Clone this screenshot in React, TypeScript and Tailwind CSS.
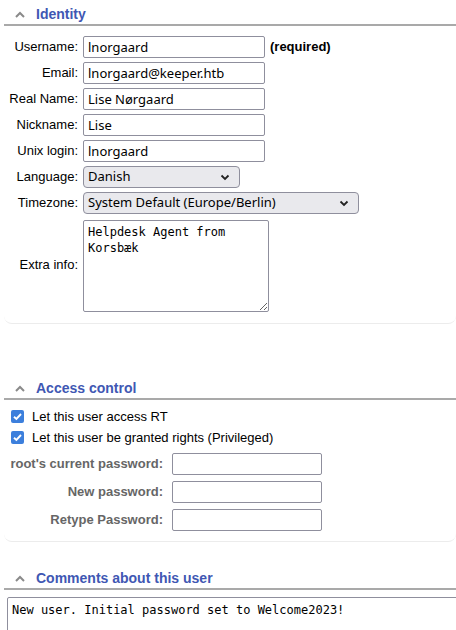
import type { ReactNode } from "react";

const sans = "font-['Liberation_Sans',Arial,sans-serif]";
const field = "font-['Noto_Sans',sans-serif]";
const mono = "font-['DejaVu_Sans_Mono',monospace]";

function Chevron({ dir = "up" }: { dir?: "up" | "down" }) {
  if (dir === "down") {
    return (
      <svg width="10" height="7" viewBox="0 0 10 7">
        <path d="M1.5 1.5 L5 5 L8.5 1.5" fill="none" stroke="#222" strokeWidth="1.8" />
      </svg>
    );
  }
  return (
    <svg width="10" height="7" viewBox="0 0 10 7">
      <path d="M1 6 L5 2 L9 6" fill="none" stroke="#8a8a8a" strokeWidth="2" />
    </svg>
  );
}

function SectionHeader({ title }: { title: string }) {
  return (
    <div className="ml-[4px] border-b-2 border-[#a9a9a9]">
      <div className="flex items-center gap-[11px] pl-[11px] pt-[4px] h-[24px]">
        <Chevron />
        <span className={`${sans} text-[14px] font-bold text-[#4057b3] leading-none`}>{title}</span>
      </div>
    </div>
  );
}

function Card({ children, className = "" }: { children: ReactNode; className?: string }) {
  return (
    <div className={`ml-[4px] rounded-b-[8px] border-b border-[#ececec] ${className}`}>
      {children}
    </div>
  );
}

function TextInput({ value, width }: { value: string; width: string }) {
  return (
    <input
      readOnly
      defaultValue={value}
      className={`${field} ${width} h-[22px] border border-[#8f8f9d] rounded-[2px] px-[4px] text-[13px] text-black outline-none`}
    />
  );
}

function Select({ value, width }: { value: string; width: string }) {
  return (
    <div
      className={`${field} ${width} h-[22px] flex items-center justify-between border border-[#8f8f9d] rounded-[4px] bg-[#e9e9ed] pl-[4px] pr-[9px] text-[13px] text-black`}
    >
      <span>{value}</span>
      <Chevron dir="down" />
    </div>
  );
}

const Label = ({ children }: { children: ReactNode }) => (
  <span className={`${sans} text-[13px] text-black text-right`}>{children}</span>
);

function Identity() {
  return (
    <>
      <SectionHeader title="Identity" />
      <Card className="pt-[10px] pb-[11px]">
        <div className="grid grid-cols-[74px_auto] gap-x-[5px] gap-y-[4px] items-center">
          <Label>Username:</Label>
          <div className="flex items-center gap-[5px]">
            <TextInput value="lnorgaard" width="w-[182px]" />
            <span className={`${sans} text-[13px] font-bold text-black`}>(required)</span>
          </div>
          <Label>Email:</Label>
          <TextInput value="lnorgaard@keeper.htb" width="w-[182px]" />
          <Label>Real Name:</Label>
          <TextInput value="Lise Nørgaard" width="w-[182px]" />
          <Label>Nickname:</Label>
          <TextInput value="Lise" width="w-[182px]" />
          <Label>Unix login:</Label>
          <TextInput value="lnorgaard" width="w-[182px]" />
          <Label>Language:</Label>
          <Select value="Danish" width="w-[157px]" />
          <Label>Timezone:</Label>
          <Select value="System Default (Europe/Berlin)" width="w-[276px]" />
          <Label>Extra info:</Label>
          <textarea
            readOnly
            defaultValue={"Helpdesk Agent from\nKorsbæk"}
            className={`${mono} mt-[2px] w-[186px] h-[92px] border border-[#8f8f9d] rounded-[2px] px-[4px] pt-[3px] text-[12px] leading-[16px] text-black outline-none`}
          />
        </div>
      </Card>
    </>
  );
}

function Check({ label }: { label: string }) {
  return (
    <div className="flex items-center gap-[8px] h-[21px] pl-[7px]">
      <span className="w-[13px] h-[13px] rounded-[2px] bg-[#3c7fdc] flex items-center justify-center">
        <svg width="11" height="11" viewBox="0 0 11 11">
          <path d="M2 5.7 L4.4 8 L9 3" fill="none" stroke="white" strokeWidth="1.9" />
        </svg>
      </span>
      <span className={`${sans} text-[13px] text-black`}>{label}</span>
    </div>
  );
}

function AccessControl() {
  const pw = ["root's current password:", "New password:", "Retype Password:"];
  return (
    <div className="mt-[50px]">
      <SectionHeader title="Access control" />
      <Card className="pt-[6px] pb-[10px]">
        <Check label="Let this user access RT" />
        <Check label="Let this user be granted rights (Privileged)" />
        <div className="mt-[5px] grid grid-cols-[159px_auto] gap-x-[9px] gap-y-[6px] items-center">
          {pw.map((p) => (
            <div key={p} className="contents">
              <span className={`${sans} text-[13px] font-bold text-[#666] text-right`}>{p}</span>
              <TextInput value="" width="w-[150px]" />
            </div>
          ))}
        </div>
      </Card>
    </div>
  );
}

function Comments() {
  return (
    <div className="mt-[22px]">
      <SectionHeader title="Comments about this user" />
      <textarea
        readOnly
        defaultValue="New user. Initial password set to Welcome2023!"
        className={`${mono} block ml-[7px] mt-[7px] w-[470px] h-[60px] border border-[#8f8f9d] rounded-[2px] px-[4px] pt-[4px] text-[12px] leading-[16px] text-black outline-none resize-none`}
      />
    </div>
  );
}

export default function App() {
  return (
    <div className="w-[456px] h-[630px] overflow-hidden bg-white">
      <Identity />
      <AccessControl />
      <Comments />
    </div>
  );
}
